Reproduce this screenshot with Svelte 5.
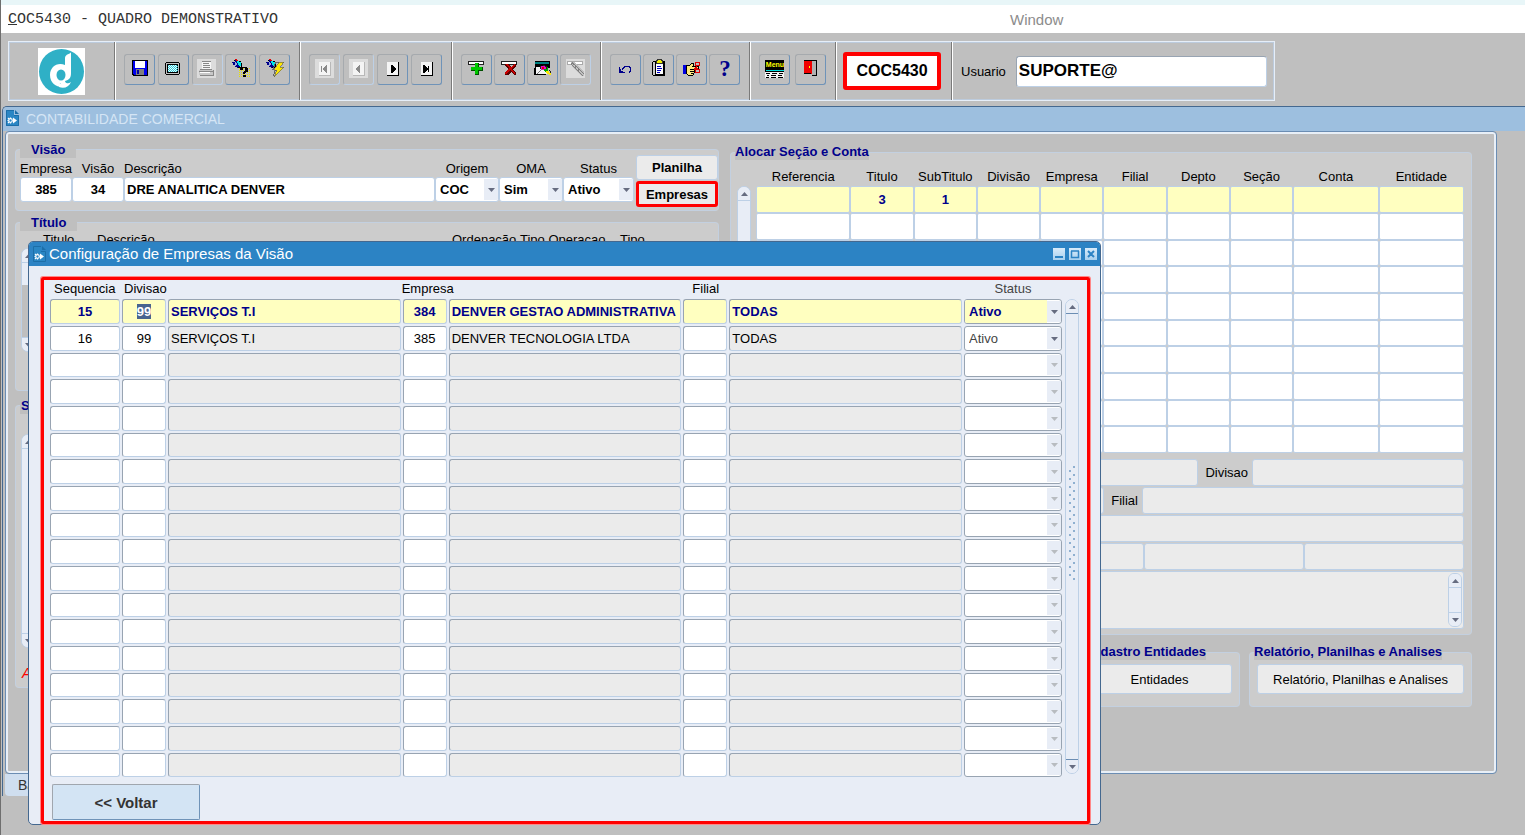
<script lang="ts">
	interface Company {
		seq: string;
		divisao: string;
		divisaoNome: string;
		empresa: string;
		empresaNome: string;
		filial: string;
		filialNome: string;
		status: string;
	}

	const blank: Company = {
		seq: '',
		divisao: '',
		divisaoNome: '',
		empresa: '',
		empresaNome: '',
		filial: '',
		filialNome: '',
		status: ''
	};

	let companies: Company[] = $state([
		{
			...blank,
			seq: '15',
			divisao: '99',
			divisaoNome: 'SERVIÇOS T.I',
			empresa: '384',
			empresaNome: 'DENVER GESTAO ADMINISTRATIVA',
			filialNome: 'TODAS',
			status: 'Ativo'
		},
		{
			...blank,
			seq: '16',
			divisao: '99',
			divisaoNome: 'SERVIÇOS T.I',
			empresa: '385',
			empresaNome: 'DENVER TECNOLOGIA LTDA',
			filialNome: 'TODAS',
			status: 'Ativo'
		},
		...Array.from({ length: 16 }, () => ({ ...blank }))
	]);

	const allocCols = [
		'Referencia',
		'Titulo',
		'SubTitulo',
		'Divisão',
		'Empresa',
		'Filial',
		'Depto',
		'Seção',
		'Conta',
		'Entidade'
	];
	const allocRows = Array.from({ length: 10 }, (_, r) =>
		allocCols.map((_, c) => (r === 0 && c === 1 ? '3' : r === 0 && c === 2 ? '1' : ''))
	);

	const toolGroups = [
		[
			{ id: 'save', label: 'Salvar' },
			{ id: 'screen', label: 'Tela' },
			{ id: 'print', label: 'Imprimir', off: true },
			{ id: 'enter-query', label: 'Entrar consulta' },
			{ id: 'run-query', label: 'Executar consulta' }
		],
		[
			{ id: 'first', label: 'Primeiro', off: true },
			{ id: 'prev', label: 'Anterior', off: true },
			{ id: 'next', label: 'Próximo' },
			{ id: 'last', label: 'Último' }
		],
		[
			{ id: 'add', label: 'Inserir' },
			{ id: 'remove', label: 'Excluir' },
			{ id: 'clear', label: 'Limpar' },
			{ id: 'edit', label: 'Editar', off: true }
		],
		[
			{ id: 'undo', label: 'Desfazer' },
			{ id: 'paste', label: 'Colar' },
			{ id: 'cut', label: 'Recortar' },
			{ id: 'help', label: 'Ajuda' }
		],
		[
			{ id: 'menu', label: 'Menu' },
			{ id: 'exit', label: 'Sair' }
		]
	];

	let firstDivisao: HTMLInputElement | undefined = $state();

	// The dialog opens with the first division selected
	$effect(() => {
		firstDivisao?.focus();
		firstDivisao?.select();
	});

	function keep(node: HTMLInputElement, first: boolean) {
		if (first) firstDivisao = node;
	}
</script>

{#snippet torch()}
	<path d="M1 4h3v-2h2v2h2v3h1v3h-3v-1h-2v-2h-2v-2h-1z" fill="#00008b" />
	<path d="M4 4h1v1h1v2h-1v1h-1z" fill="#9ad" />
	<path d="M6 3h2v1h2v1h1v3h-3v-1h-1v-2h-1z" fill="#00e8e8" />
	<path d="M4 1h2v1h1v1h-2v-1h-1z" fill="#e00000" />
	<path d="M3 2h1v1h-1zM10 5h1v4h-1zM7 9h3v1h-3zM8 3h2v1h-2z" fill="#000" />
{/snippet}

{#snippet page(off: boolean)}
	{#if off}
		<rect y="1" width="19" height="19" fill="#dcdcdc" />
		<path d="M4 4h12v14h-12z" fill="#b8b8b8" />
		<path d="M4 4h11v13h-11z" fill="#f4f4f4" />
	{:else}
		<path d="M4 4h12v14h-12z" fill="#000" />
		<path d="M4 4h11v13h-11z" fill="#f4f4f4" />
	{/if}
{/snippet}

{#snippet icon(id: string)}
	<svg width="20" height="20" viewBox="0 0 20 20" shape-rendering="crispEdges" aria-hidden="true">
		{#if id === 'save'}
			<path d="M2 2h16v16h-15l-1-1z" fill="#000" />
			<path d="M3 3h14v14h-13l-1-1z" fill="#0000f0" />
			<path d="M5 3h10v7h-10z" fill="#fff" />
			<path d="M6 11h8v6h-8z" fill="#808080" />
			<path d="M7 12h2v4h-2z" fill="#0000a0" />
		{:else if id === 'screen'}
			<path d="M3 4h13v1h1v11h-1v1h-13v-1h-1v-11h1z" fill="#000" />
			<path d="M3 5h13v11h-13z" fill="#c0c0c0" />
			<path d="M4 6h11v9h-11z" fill="#000" />
			<path d="M5 7h9v7h-9z" fill="#e8ffff" />
			<path
				d="M5 7.500h9M6 8.500h9M5 9.500h9M6 10.500h9M5 11.500h9M6 12.500h9M5 13.500h9"
				stroke="#30c8d8"
				stroke-dasharray="1 1"
			/>
		{:else if id === 'print'}
			<rect y="1" width="19" height="19" fill="#dcdcdc" />
			<path d="M5 3h9v8h-9z" fill="#f6f6f6" />
			<path d="M5 3h9v1h-9zM6 5h6v1h-6zM6 7h7v1h-7zM6 9h7v1h-7z" fill="#888" />
			<path d="M2 12h15v5h-15z" fill="#c8c8c8" />
			<path d="M3 11h12v1h-12zM2 13h14v1h-14zM3 17h14v1h-14zM16 12h1v5h-1z" fill="#888" />
			<path d="M3 14h10v1h-10z" fill="#fff" />
		{:else if id === 'enter-query'}
			{@render torch()}
			<path
				d="M8 10.500h11M8 12.500h11M8 14.500h11M8 16.500h11M8 18.500h11"
				stroke="#e8e000"
				stroke-dasharray="1 1"
			/>
			<path
				d="M10 9h6v1h1v4h-2v1h-1v1h-2v-2h1v-1h1v-3h-2v2h-3v-2h1zM12 17h3v2h-3z"
				fill="#000"
			/>
		{:else if id === 'run-query'}
			{@render torch()}
			<path d="M15 4h-4l-3 7h3l-3 7" stroke="#666" fill="none" />
			<path d="M14 4h5l-4 5h4l-10 10l3-7h-3z" fill="#ffe800" stroke="#555" stroke-width="0.6" />
		{:else if id === 'first'}
			{@render page(true)}
			<path d="M6 8h1v6h-1zM12 7v8h-1l-3-4l3-4z" fill="#8a8a8a" />
		{:else if id === 'prev'}
			{@render page(true)}
			<path d="M11 7v8h-1l-3-4l3-4z" fill="#8a8a8a" />
		{:else if id === 'next'}
			{@render page(false)}
			<path d="M8 7v8h1l4-4l-4-4z" fill="#000" />
		{:else if id === 'last'}
			{@render page(false)}
			<path d="M6 7v8h1l4-4l-4-4zM11 8h1v6h-1z" fill="#000" />
		{:else if id === 'add' || id === 'remove'}
			<path d="M1 3h16v4h-16z" fill="#222" />
			<path d="M2 4h14v2h-14z" fill="#fff" />
			{#if id === 'add'}
				<path d="M8 5h4v4h4v4h-4v4h-4v-4h-4v-4h4z" fill="#005000" />
				<path d="M8 5h3v4h4v3h-4v4h-3v-4h-4v-3h4z" fill="#00c800" />
			{:else}
				<path d="M5 6h3l3 3l3-3h2v2l-3 3l3 4v2h-2l-3-3l-3 3h-3v-2l3-4l-3-3z" fill="#5a0000" />
				<path d="M5 6h2l4 4l3-4h1v1l-3 4l3 4v1h-1l-4-4l-3 4h-2v-1l4-5l-3-3z" fill="#c80000" />
			{/if}
		{:else if id === 'clear'}
			<path d="M2 3h15v5h-15z" fill="#000" />
			<path d="M2 4h14v2h-14z" fill="#008080" />
			<path d="M2 8h15v2h-15zM1 10h2v7h-2zM3 16h10v1h-10z" fill="#000" />
			<path d="M3 9h12v7h-12z" fill="#f4f4f4" />
			<path d="M4 16l5-5M13 9v3" stroke="#777" />
			<path d="M7 8h3v-1h2v1h2v3h1v2h-4v-1h-2v-1h-2z" fill="#222" />
			<path d="M8 8h4v1h1v2h-2v1h-2v-1h-1z" fill="#f000d0" />
			<path d="M9 9h2v2h-2z" fill="#e00000" />
			<path d="M11 11h3v-2h1v5h-3v-1h-1z" fill="#00b000" />
			<path d="M13 13h3v2h2v2h-2v-1h-2v-1h-1z" fill="#ffe800" />
			<path d="M16 12h1v1h-1zM17 13h1v2h-1z" fill="#222" />
		{:else if id === 'edit'}
			<rect y="1" width="19" height="19" fill="#dcdcdc" />
			<path d="M1.500 3.500h15v3h-15z" fill="#fff" stroke="#aaa" />
			<path d="M5 4h4l9 10v4h-3l-9-10z" fill="#c0c0c0" />
			<path d="M6 4l12 12M5 6l12 12M5 5h2v2M8 10l3-2M11 13l3-2" stroke="#808080" fill="none" />
		{:else if id === 'undo'}
			<path d="M6 12c3-6 9-4 9 0l-2 3" fill="none" stroke="#00008b" />
			<path d="M3 9v6h6v-1l-4-1l-1-4z" fill="#00008b" />
		{:else if id === 'paste'}
			<path d="M4 3h11l1 1v13l-1 1h-11l-1-1v-13z" fill="#000" />
			<path d="M4 4h11v13h-11z" fill="#c8c8c8" />
			<path d="M6 4h8v12h-8z" fill="#fff" stroke="#000" />
			<path d="M7 2h1v-1h4v1h1v3h-6z" fill="#f0f000" stroke="#333" stroke-width="1" />
			<path d="M8 8h4v1h-4zM8 10h5v1h-5zM8 12h4v1h-4zM8 14h3v1h-3z" fill="#0000c0" />
		{:else if id === 'cut'}
			<path d="M1 7h3v9h-3z" fill="#0000e0" />
			<path d="M4 7h4l2-2h2l-1 3h5v2h-4v5l-1 2h-5l-2-2z" fill="#ffe980" stroke="#000" />
			<path d="M8 11h5M8 13h5M9 15h3" stroke="#000" />
			<circle cx="15.500" cy="6" r="2" fill="none" stroke="#e00000" />
			<circle cx="15.500" cy="13" r="2" fill="none" stroke="#e00000" />
			<path d="M15 8l-3 4M13 9l3 2" stroke="#e00000" />
		{:else if id === 'help'}
			<text
				x="10"
				y="18"
				text-anchor="middle"
				font-family="Liberation Serif, serif"
				font-weight="bold"
				font-size="23"
				fill="#00008b">?</text
			>
		{:else if id === 'menu'}
			<path d="M0 2h19v9h-19z" fill="#000" />
			<text
				x="10"
				y="9"
				text-anchor="middle"
				font-family="Liberation Sans, sans-serif"
				font-weight="bold"
				font-size="7"
				fill="#ffff00">Menu</text
			>
			<path d="M0 11h19v3h-19z" fill="#000" />
			<path d="M1 12h18v1h-18z" fill="#00e0e0" />
			<path d="M0 14h19v6h-19z" fill="#f4f4f4" />
			<path
				d="M1 15.500h4M7 15.500h5M14 15.500h4M2 17.500h2M6 17.500h5M13 17.500h4M1 19.500h3M6 19.500h5M13 19.500h5"
				stroke="#000"
			/>
		{:else if id === 'exit'}
			<path d="M3 2h13v16h-5v-2h-8z" fill="#000" />
			<path d="M11 3h4v14h-4z" fill="#b0b0b0" />
			<path d="M3 3h7l1 1v12l-3-1h-5z" fill="#f00000" />
			<path d="M8 8h1v2h-1z" fill="#ff0" />
		{/if}
	</svg>
{/snippet}

{#snippet docIcon()}
	<svg width="13" height="16" viewBox="0 0 13 16" aria-hidden="true">
		<path d="M0 0h8v5h5v11H0z" fill="#2a86c4" />
		<path d="M.500 15.500V.500H8M8 5.500h4.500v10H.500" fill="none" stroke="#1c6ea8" />
		<path d="M9 0v4h4z" fill="#1c6ea8" />
		<circle cx="4.500" cy="10.500" r="1.800" fill="none" stroke="#fff" stroke-width="1.200" />
		<path
			d="M1.500 10.500h1M4.500 7.500v1M4.500 12.500v1M2 8l1 1M2 13l1-1"
			stroke="#fff"
			stroke-width="1.200"
		/>
		<path d="M7 7.500v6l4-3z" fill="#fff" />
	</svg>
{/snippet}

{#snippet arrow(dir: string)}
	<svg class="arrow" width="7" height="4" viewBox="0 0 7 4" aria-hidden="true">
		<path d={dir === 'up' ? 'M0 4h7L3.500 0z' : 'M0 0h7L3.500 4z'} fill="currentColor" />
	</svg>
{/snippet}

{#snippet scrollbar(kind: string)}
	<div class="scroll {kind}">
		<button tabindex="-1" aria-label="Subir">{@render arrow('up')}</button>
		<span class="track"><span class="grip"></span></span>
		<button tabindex="-1" aria-label="Descer">{@render arrow('down')}</button>
	</div>
{/snippet}

{#snippet dropdown(id: string, label: string, value: string, off: boolean)}
	<span class="drop" class:off>
		<select {id} aria-label={label} disabled={off}>
			<option>{value}</option>
		</select>
		<span class="drop-arrow">{@render arrow('down')}</span>
	</span>
{/snippet}

<div class="desktop">
	<div class="strip"></div>
	<nav class="menubar">
		<a class="mono" href="#coc5430"><u>C</u>OC5430 - QUADRO DEMONSTRATIVO</a>
		<a class="window-menu" href="#window">Window</a>
	</nav>

	<div class="toolbar" role="toolbar">
		<div class="logo">
			<svg width="47" height="47" viewBox="0 0 47 47" role="img" aria-label="Denver">
				<rect width="47" height="47" fill="#fff" />
				<circle cx="23.500" cy="23.500" r="22.500" fill="#2fb0c6" />
				<path
					d="M33 4c0 2-6 2-6 6v7c-8-3-15 2-15 10c0 8 6 12 12 12c-2-1-3-3-2-4c2 3 7 4 10 0c-2 1-5 0-5-2c4-1 6-3 6-8z"
					fill="#fff"
				/>
				<ellipse cx="23" cy="27" rx="4.500" ry="5.500" fill="#2fb0c6" />
				<path d="M21 35c3 2 8 2 12-1c-2 5-7 7-12 5z" fill="#fff" />
			</svg>
		</div>
		{#each toolGroups as group}
			<div class="tools">
				{#each group as tool}
					<button class="tool" class:off={tool.off} aria-label={tool.label} disabled={tool.off}>
						{@render icon(tool.id)}
					</button>
				{/each}
			</div>
		{/each}
		<div class="code"><span>COC5430</span></div>
		<div class="user">
			<label for="usuario">Usuario</label>
			<input id="usuario" value="SUPORTE@" />
		</div>
	</div>

	<main class="window">
		<header class="window-title">{@render docIcon()}<h1>CONTABILIDADE COMERCIAL</h1></header>

		<div class="panel">
			<div class="left">
				<fieldset class="visao">
					<legend>Visão</legend>
					<div class="visao-row">
						<div class="field narrow">
							<label for="v-empresa">Empresa</label><input id="v-empresa" value="385" />
						</div>
						<div class="field narrow">
							<label for="v-visao">Visão</label><input id="v-visao" value="34" />
						</div>
						<div class="field wide">
							<label for="v-desc">Descrição</label>
							<input id="v-desc" value="DRE ANALITICA DENVER" />
						</div>
						<div class="field pick">
							<label for="v-origem">Origem</label>
							{@render dropdown('v-origem', 'Origem', 'COC', false)}
						</div>
						<div class="field pick">
							<label for="v-oma">OMA</label>
							{@render dropdown('v-oma', 'OMA', 'Sim', false)}
						</div>
						<div class="field pick last">
							<label for="v-status">Status</label>
							{@render dropdown('v-status', 'Status', 'Ativo', false)}
						</div>
						<div class="visao-actions">
							<button class="plain bold">Planilha</button>
							<button class="plain bold marked">Empresas</button>
						</div>
					</div>
				</fieldset>

				<fieldset class="titulo">
					<legend>Título</legend>
					<div class="titulo-head">
						<span>Titulo</span><span>Descrição</span><span>Ordenação</span>
						<span>Tipo Operacao</span><span>Tipo</span>
					</div>
					{@render scrollbar('short')}
				</fieldset>

				<fieldset class="subtitulo">
					<legend>S</legend>
					{@render scrollbar('tall')}
					<p class="warning">A</p>
				</fieldset>
			</div>

			<div class="right">
				<fieldset class="alocar">
					<legend>Alocar Seção e Conta</legend>
					<div class="alocar-grid">
						{@render scrollbar('side')}
						<table>
							<colgroup>
								<col class="w-ref" />
								{#each { length: 7 } as _}<col class="w-mid" />{/each}
								<col class="w-big" /><col class="w-big" />
							</colgroup>
							<thead>
								<tr>{#each allocCols as col}<th scope="col">{col}</th>{/each}</tr>
							</thead>
							<tbody>
								{#each allocRows as row, r}
									<tr class:current={r === 0}>
										{#each row as value, c}
											<td><input aria-label={allocCols[c]} {value} /></td>
										{/each}
									</tr>
								{/each}
							</tbody>
						</table>
					</div>
					<div class="detail">
						<div class="detail-row">
							<input aria-label="Seção" readonly />
							<label for="d-divisao">Divisao</label>
							<input id="d-divisao" class="w-divisao" readonly />
						</div>
						<div class="detail-row">
							<input aria-label="Empresa" readonly />
							<label for="d-filial">Filial</label>
							<input id="d-filial" class="w-filial" readonly />
						</div>
						<div class="detail-row"><input aria-label="Conta" readonly /></div>
						<div class="detail-row joined">
							<input aria-label="Entidade" readonly />
							<input class="w-third" aria-label="Entidade nome" readonly />
							<input class="w-third" aria-label="Entidade tipo" readonly />
						</div>
						<div class="notes">
							<textarea aria-label="Observação" readonly></textarea>
							{@render scrollbar('inner')}
						</div>
					</div>
				</fieldset>

				<div class="shortcuts">
					<fieldset class="entidades">
						<legend>Cadastro Entidades</legend>
						<button class="plain">Entidades</button>
					</fieldset>
					<fieldset class="relatorios">
						<legend>Relatório, Planilhas e Analises</legend>
						<button class="plain">Relatório, Planilhas e Analises</button>
					</fieldset>
				</div>
			</div>
		</div>
		<div class="tab">Ba</div>
	</main>

	<div class="dialog" role="dialog" aria-labelledby="dialog-title">
		<header class="dialog-title">
			{@render docIcon()}
			<h2 id="dialog-title">Configuração de Empresas da Visão</h2>
			<div class="controls">
				<button aria-label="Minimizar">
					<svg width="12" height="12" viewBox="0 0 12 12"><path d="M2 9h8" stroke-width="2" /></svg>
				</button>
				<button aria-label="Maximizar">
					<svg width="12" height="12" viewBox="0 0 12 12">
						<path d="M2.500 3v6.500h7V3M2 3h8" stroke-width="1.500" />
					</svg>
				</button>
				<button aria-label="Fechar">
					<svg width="12" height="12" viewBox="0 0 12 12">
						<path d="M3 3l6 6M9 3l-6 6" stroke-width="2" />
					</svg>
				</button>
			</div>
		</header>

		<div class="dialog-body">
			<div class="frame">
				<div class="companies">
					<table>
						<colgroup>
							<col class="w-seq" /><col class="w-code" /><col /><col class="w-code" /><col />
							<col class="w-code" /><col /><col class="w-status" />
						</colgroup>
						<thead>
							<tr>
								<th scope="col">Sequencia</th>
								<th scope="col">Divisao</th>
								<th></th>
								<th scope="col">Empresa</th>
								<th></th>
								<th scope="col">Filial</th>
								<th></th>
								<th scope="col" class="muted">Status</th>
							</tr>
						</thead>
						<tbody>
							{#each companies as row, i}
								<tr class:current={i === 0}>
									<td><input class="code-cell" aria-label="Sequencia" value={row.seq} /></td>
									<td>
										<input
											class="code-cell"
											aria-label="Divisao"
											value={row.divisao}
											use:keep={i === 0}
										/>
									</td>
									<td><input class="name" aria-label="Nome da divisao" value={row.divisaoNome} readonly /></td>
									<td><input class="code-cell" aria-label="Empresa" value={row.empresa} /></td>
									<td><input class="name" aria-label="Nome da empresa" value={row.empresaNome} readonly /></td>
									<td><input class="code-cell" aria-label="Filial" value={row.filial} /></td>
									<td><input class="name" aria-label="Nome da filial" value={row.filialNome} readonly /></td>
									<td>{@render dropdown(`status-${i}`, 'Status', row.status, !row.seq)}</td>
								</tr>
							{/each}
						</tbody>
					</table>
					{@render scrollbar('long')}
				</div>
				<button class="back">&lt;&lt; Voltar</button>
			</div>
		</div>
	</div>
</div>

<style>
	:global(body) {
		background: #bfbfbf;
	}

	.desktop {
		--line: #bdd0e6;
		--navy: #00008b;
		--pale: #e8edf6;
		position: relative;
		min-height: 100vh;
		box-sizing: border-box;
		overflow: hidden;
		border-left: 1px solid #6e6e6e;
		background: #bfbfbf;
		color: #000;
		font: 13px/15px 'Liberation Sans', Arial, sans-serif;
	}

	button,
	input,
	select,
	textarea {
		box-sizing: border-box;
		margin: 0;
		padding: 0;
		border: 0;
		border-radius: 0;
		outline: none;
		font: inherit;
		color: inherit;
	}

	fieldset {
		min-width: 0;
		margin: 0;
		padding: 0 4px;
		border: 1px solid #c3d0e0;
		border-radius: 4px;
		background: #ccc;
	}

	legend {
		padding: 0;
		background: #bfbfbf;
		color: var(--navy);
		font-weight: bold;
		line-height: 16px;
	}

	/* top bars */
	.strip {
		height: 5px;
		background: #e8f6f8;
	}

	.menubar {
		display: flex;
		align-items: center;
		height: 28px;
		padding-left: 7px;
		background: #fff;
		font-size: 15px;
	}

	.menubar a {
		color: #333;
		text-decoration: none;
	}

	.mono {
		flex: 0 0 1002px;
		font-family: 'Liberation Mono', 'Courier New', monospace;
	}

	.menubar .window-menu {
		color: #8c8c8c;
	}

	.toolbar {
		display: inline-flex;
		box-sizing: border-box;
		height: 60px;
		margin: 8px 7px 5px;
		border: 1px solid #e6eef8;
		box-shadow: inset 0 0 0 1px #bccbdd;
		vertical-align: top;
	}

	.toolbar > div {
		display: flex;
		align-items: center;
		box-sizing: border-box;
	}

	.toolbar > div + div {
		border-left: 1px solid #7a7a7a;
		box-shadow: inset 1px 0 #fff;
	}

	.logo {
		width: 105px;
		justify-content: center;
	}

	.toolbar .tools {
		width: 149px;
		justify-content: space-between;
		padding: 0 9px 3px;
	}

	.toolbar .tools:nth-child(2) {
		width: 185px;
	}

	.toolbar .tools:nth-child(3) {
		width: 152px;
	}

	.toolbar .tools:nth-child(6) {
		width: 86px;
	}

	.tool {
		display: grid;
		place-items: center;
		width: 31px;
		height: 31px;
		padding-bottom: 3px;
		border: 1px solid;
		border-color: #a6aaae #6f93b8 #6f93b8 #a6aaae;
		border-radius: 3px;
		background: #bfbfbf;
	}

	.tool.off {
		border-color: #a6aaae #bdd0e6 #bdd0e6 #a6aaae;
	}

	.code {
		width: 116px;
		padding-left: 7px;
	}

	.code span {
		width: 90px;
		border: 4px solid #f00;
		border-radius: 3px;
		background: #fff;
		font-size: 16px;
		font-weight: bold;
		line-height: 30px;
		text-align: center;
	}

	.user {
		gap: 10px;
		padding: 0 7px 0 9px;
	}

	.user input {
		width: 251px;
		height: 31px;
		padding: 0 2px;
		border: 1px solid;
		border-color: #98a4b2 var(--line) var(--line) #98a4b2;
		border-radius: 3px;
		background: #fff;
		font-size: 17px;
		font-weight: bold;
	}

	/* main window */
	.window {
		margin-left: 1px;
		border: solid #44688f;
		border-width: 1px 0 0 1px;
		border-radius: 5px 0 0 0;
	}

	.window-title {
		display: flex;
		align-items: center;
		gap: 7px;
		height: 24px;
		padding: 0 3px;
		border-radius: 4px 0 0 0;
		background: #9dbfdf;
	}

	.window-title svg {
		margin-bottom: 2px;
	}

	h1,
	h2 {
		margin: 0;
		font-size: 14px;
		font-weight: normal;
	}

	h1 {
		color: #d5e5f5;
	}

	.panel {
		display: grid;
		grid-template-columns: minmax(0, 704fr) minmax(0, 742fr);
		column-gap: 11px;
		margin: 0 28px 0 2px;
		padding: 9px 24px 66px 9px;
		border: 1px solid #6b8db3;
		border-radius: 4px;
		box-shadow: inset 0 0 0 2px #e8eff7;
	}

	.left {
		display: flex;
		flex-direction: column;
		gap: 3px;
	}

	.left legend {
		padding: 0 11px;
		line-height: 17px;
	}

	.visao {
		padding-right: 0;
	}

	.visao-row {
		display: flex;
		padding-bottom: 7px;
	}

	.field {
		display: flex;
		flex-direction: column;
		gap: 1px;
		padding-top: 3px;
		text-align: center;
	}

	.narrow {
		width: 52px;
	}

	.wide {
		flex: 1;
		text-align: left;
	}

	.pick {
		width: 64px;
	}

	.pick.last {
		width: 71px;
	}

	.field input,
	.field .drop {
		height: 25px;
		border: 1px solid var(--line);
		border-radius: 3px;
		background: #fff;
		font-weight: bold;
	}

	.narrow input {
		width: 100%;
		text-align: center;
	}

	.wide input {
		padding: 0 2px;
	}

	.visao-actions {
		display: flex;
		flex-direction: column;
		gap: 1px;
		width: 82px;
		margin: -3px 0 -4px 2px;
	}

	.plain {
		height: 25px;
		border: 1px solid var(--line);
		border-radius: 3px;
		background: #ebebeb;
	}

	.bold {
		font-weight: bold;
	}

	.marked {
		height: 26px;
		border: 3px solid #f00;
	}

	.titulo {
		height: 175px;
	}

	.titulo-head {
		display: grid;
		grid-template-columns: 54px minmax(0, 1fr) 68px 100px 94px;
		padding: 1px 0 0 23px;
	}

	.subtitulo {
		flex: 0 0 291px;
		box-sizing: border-box;
		margin-top: 3px;
	}

	.subtitulo legend {
		padding: 0 1px;
	}

	.warning {
		margin: 18px 0 0 2px;
		color: #f00;
		font-size: 14px;
		font-style: italic;
	}

	.right {
		padding-top: 3px;
	}

	.alocar-grid {
		display: flex;
		gap: 5px;
		padding: 0 3px 0 2px;
	}

	table {
		width: 100%;
		table-layout: fixed;
		border-collapse: collapse;
	}

	th,
	td {
		padding: 0;
	}

	th {
		font-weight: normal;
		white-space: nowrap;
	}

	tr {
		--row: 27px;
	}

	tbody tr:nth-child(3n) {
		--row: 26px;
	}

	td {
		height: var(--row);
	}

	td input {
		display: block;
		width: 100%;
		background: #fff;
		border: 1px solid;
	}

	.alocar th {
		height: 25px;
		padding-bottom: 1px;
		line-height: 16px;
		vertical-align: bottom;
	}

	.alocar td input {
		height: var(--row);
		border-color: var(--line);
		border-radius: 2px;
		text-align: center;
	}

	.current input,
	.current select {
		background: #ffffc0 !important;
		color: var(--navy);
		font-weight: bold;
	}

	.w-ref {
		width: 94px;
	}

	.w-mid {
		width: 63px;
	}

	.w-big {
		width: 85px;
	}

	.detail {
		display: flex;
		flex-direction: column;
		gap: 1px;
		padding: 6px 3px 5px;
	}

	.detail-row {
		display: flex;
		align-items: center;
		gap: 4px;
	}

	.detail-row.joined {
		gap: 0;
	}

	.detail-row input {
		flex: 1;
		min-width: 0;
		height: 27px;
		border: 1px solid var(--line);
		border-radius: 3px;
		background: #ebebeb;
	}

	.detail-row label {
		padding-left: 3px;
	}

	.detail-row .w-divisao {
		flex: 0 0 212px;
	}

	.detail-row .w-filial {
		flex: 0 0 322px;
	}

	.detail-row .w-third {
		flex: 0 0 160px;
	}

	.notes {
		display: flex;
		box-sizing: border-box;
		height: 58px;
		padding: 1px;
		border: 1px solid var(--line);
		border-radius: 3px;
		background: #ebebeb;
	}

	.notes textarea {
		flex: 1;
		background: transparent;
		resize: none;
	}

	.shortcuts {
		display: flex;
		justify-content: flex-end;
		gap: 9px;
		margin-top: 9px;
	}

	.shortcuts fieldset {
		padding-bottom: 12px;
	}

	.entidades {
		width: 151px;
	}

	.relatorios {
		width: 213px;
	}

	.shortcuts .plain {
		display: block;
		width: calc(100% - 6px);
		height: 30px;
		margin: 4px 3px 0;
	}

	.tab {
		width: 60px;
		margin-left: 2px;
		padding-left: 13px;
		border-radius: 0 0 4px 4px;
		background: #cfdeef;
		color: #333;
		font-size: 14px;
		line-height: 22px;
	}

	/* drop-downs */
	.drop {
		display: flex;
		box-sizing: border-box;
		overflow: hidden;
		text-align: left;
	}

	.drop select {
		flex: 1;
		min-width: 0;
		padding: 0 0 0 4px;
		appearance: none;
		background: transparent;
		opacity: 1;
	}

	.drop-arrow {
		display: grid;
		place-items: center;
		width: 14px;
		margin: 1px 0;
		background: var(--pale);
		color: #666c80;
	}

	.drop.off .drop-arrow {
		color: #b8bcc0;
	}

	.arrow {
		display: block;
	}

	/* scrollbars */
	.scroll {
		display: flex;
		flex-direction: column;
		flex: none;
		box-sizing: border-box;
		width: 14px;
		border: 1px solid var(--line);
		border-radius: 7px;
		background: var(--pale);
		overflow: hidden;
	}

	.scroll button {
		display: grid;
		place-items: center;
		height: 13px;
		background: var(--pale);
		color: #666c80;
	}

	.track {
		flex: 1;
		display: grid;
		place-items: center;
		border: solid var(--line);
		border-width: 1px 0;
	}

	.short,
	.tall {
		margin-left: 1px;
	}

	.short {
		height: 104px;
		margin-top: 1px;
	}

	.short .track {
		background: linear-gradient(var(--pale) 22px, #bfbfbf 22px);
	}

	.tall {
		height: 214px;
		margin-top: 20px;
	}

	.side {
		margin-top: 26px;
	}

	.inner {
		border-radius: 6px;
	}

	.long {
		margin: 19px 0 4px;
	}

	.long .track {
		padding-bottom: 28px;
		border-color: #6b8db3;
	}

	.long .grip {
		width: 8px;
		height: 116px;
		background:
			radial-gradient(circle at 2px 6px, #8fb0d0 1px, transparent 1px) 0 0 / 8px 8px,
			radial-gradient(circle at 6px 2px, #8fb0d0 1px, transparent 1px) 0 0 / 8px 8px;
	}

	/* dialog window */
	.dialog {
		position: absolute;
		top: 241px;
		left: 27px;
		right: 424px;
		border: 1px solid #44688f;
		border-radius: 5px;
		background: var(--pale);
	}

	.dialog-title {
		display: flex;
		align-items: center;
		gap: 3px;
		height: 24px;
		padding: 0 3px 0 4px;
		border-radius: 4px 4px 0 0;
		background: #2c83c4;
		color: #fff;
	}

	.dialog-title h2 {
		flex: 1;
		font-size: 15px;
		line-height: 18px;
	}

	.controls {
		display: flex;
		gap: 4px;
	}

	.controls button {
		width: 12px;
		height: 12px;
		background: linear-gradient(#d8ebfa, #a8d0ee);
	}

	.controls svg {
		display: block;
		fill: none;
		stroke: #2c83c4;
	}

	.dialog-body {
		padding: 11px 10px 0 12px;
	}

	.frame {
		padding: 0 8px 1px 5px;
		border: 3px solid #f00;
		border-radius: 2px;
		box-shadow: 0 0 0 1px #f88;
	}

	.companies {
		display: flex;
		gap: 2px;
	}

	.companies th {
		height: 18px;
		line-height: 18px;
		text-align: left;
		padding-left: 3px;
	}

	.companies th:first-child {
		padding-left: 5px;
	}

	.companies th:nth-child(4) {
		padding-left: 0;
	}

	.companies th:nth-child(6) {
		padding-left: 10px;
	}

	.companies th.muted {
		padding-left: 0;
		color: #444;
		text-align: center;
	}

	.companies td {
		padding: 1px;
		height: calc(var(--row) - 2px);
	}

	.companies td input,
	.companies .drop {
		height: calc(var(--row) - 2px);
		border: 1px solid;
		border-color: #98a4b2 var(--line) var(--line) #98a4b2;
		border-radius: 3px;
		background: #fff;
	}

	.companies .code-cell {
		text-align: center;
	}

	.companies td .name {
		padding: 0 2px;
		background: #ebebeb;
	}

	.companies .drop {
		border-color: #98a4b2;
	}

	.companies select {
		padding-left: 4px;
		color: #444;
	}

	.companies .current select {
		color: var(--navy);
	}

	.code-cell::selection {
		background: #48648f;
		color: #fff;
	}

	.w-seq {
		width: 72px;
	}

	.w-code {
		width: 46px;
	}

	.w-status {
		width: 100px;
	}

	.back {
		display: block;
		width: 148px;
		height: 36px;
		margin: 6px 0 0 3px;
		border: 1px solid;
		border-color: #a0a6ae #6f93b8 #6f93b8 #a0a6ae;
		border-radius: 2px;
		background: #d3e4f4;
		color: #333;
		font-size: 15px;
		font-weight: bold;
	}
</style>
